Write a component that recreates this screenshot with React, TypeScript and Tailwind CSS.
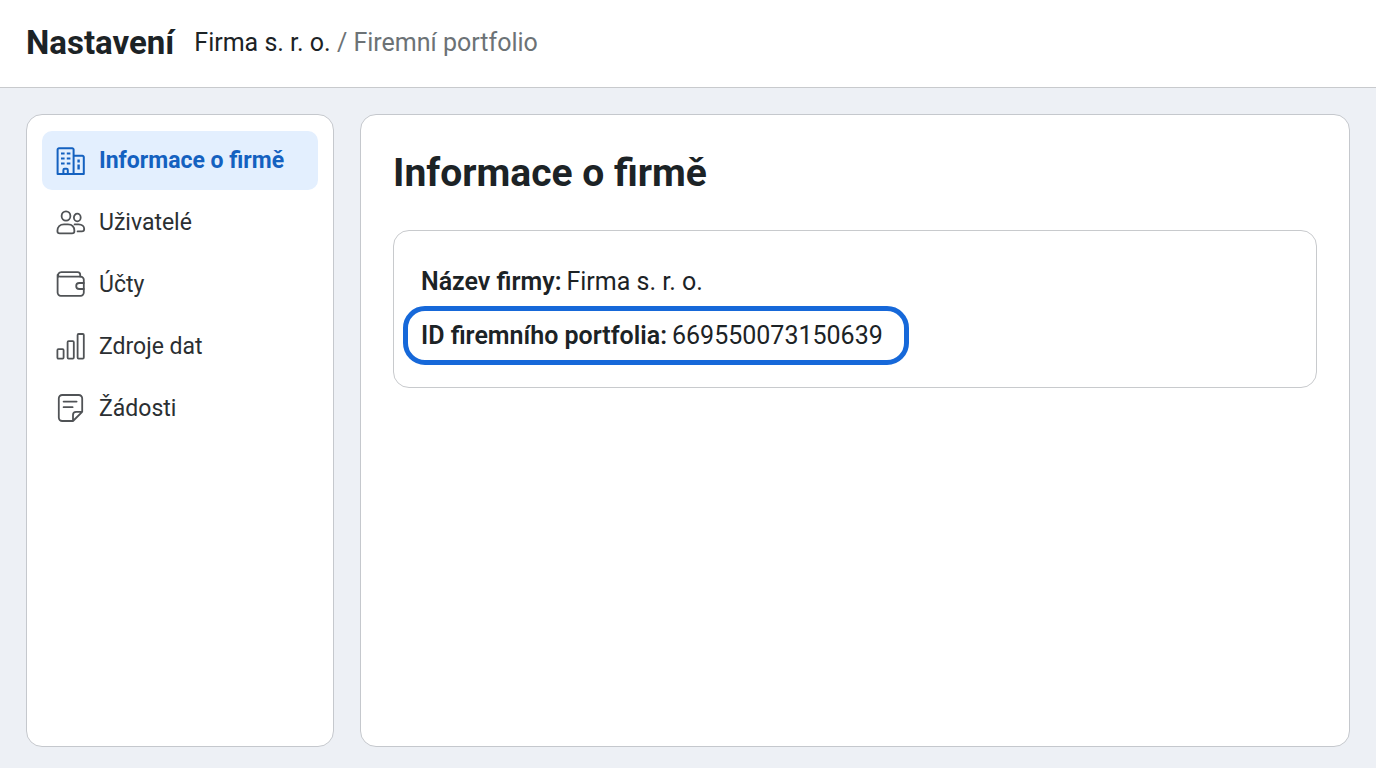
import React, { useState } from 'react';
import clsx from 'clsx';

type IconProps = { children: React.ReactNode };

function Icon({ children }: IconProps) {
    return (
        <svg
            viewBox="0 0 30 30"
            className="h-[30px] w-[30px] shrink-0"
            fill="none"
            stroke="currentColor"
            strokeWidth="1.8"
            strokeLinecap="round"
            strokeLinejoin="round"
            aria-hidden="true"
        >
            {children}
        </svg>
    );
}

const BuildingIcon = () => (
    <Icon>
        <path strokeWidth="2" d="M18 28H1.6V3.6A1.4 1.4 0 0 1 3 2.2H16.2A1.4 1.4 0 0 1 17.6 3.6V28M17.6 9.8H26.4A1.4 1.4 0 0 1 27.8 11.2V28H17.6" />
        <path strokeWidth="2" d="M7.4 28V24A1.2 1.2 0 0 1 8.6 22.8H10.6A1.2 1.2 0 0 1 11.8 24V28" />
        {/* windows */}
        <path strokeWidth="2" strokeLinecap="butt" d="M5 7.4H8.6M10.8 7.4H14.4M5 12.4H8.6M10.8 12.4H14.4M5 17.6H8.6M10.8 17.6H14.4" />
        <path strokeWidth="2.4" strokeLinecap="butt" d="M22.6 13.4V16.6M22.6 18.6V23.6" />
    </Icon>
);

const UsersIcon = () => (
    <Icon>
        <ellipse cx="10" cy="8" rx="4.4" ry="4.7" />
        <ellipse cx="21.3" cy="9.5" rx="3.4" ry="3.8" />
        <path d="M1.4 23C1.4 19 4 16.4 8 16.4H12C16 16.4 18.4 19 18.4 23A2.4 2.4 0 0 1 16 25.4H3.8A2.4 2.4 0 0 1 1.4 23Z" />
        <path d="M18.6 16.4H22.6C26 16.4 28.2 18.4 28.2 21C28.2 22.6 27.2 23.4 25.8 23.4H21.6" />
    </Icon>
);

const WalletIcon = () => (
    <Icon>
        <path d="M2 6.8C1.6 4 2.8 2.2 5.4 2.2H21.6A2.6 2.6 0 0 1 24.2 4.8V6.6" />
        <path d="M1.6 5V22.6A3.2 3.2 0 0 0 4.8 25.8H24.6A3.2 3.2 0 0 0 27.8 22.6V9.8A3.2 3.2 0 0 0 24.6 6.6H4.2C2.6 6.6 1.6 6 1.6 5" />
        <path d="M27.8 13H23.2A3 3 0 0 0 23.2 19H27.8" />
    </Icon>
);

const ChartIcon = () => (
    <Icon>
        <rect x="1.4" y="17.2" width="6.2" height="9.4" rx="1" />
        <rect x="11.6" y="9.2" width="6.2" height="17.4" rx="1" />
        <rect x="21.6" y="2" width="6.2" height="24.6" rx="1" />
    </Icon>
);

const NoteIcon = () => (
    <Icon>
        <path d="M17 27H6.2A3.4 3.4 0 0 1 2.8 23.6V4.4A3.4 3.4 0 0 1 6.2 1H22.8A3.4 3.4 0 0 1 26.2 4.4V17.8L17 27V21A3.2 3.2 0 0 1 20.2 17.8H26.2" />
        <path d="M7.6 7.6H20.6M7.6 13.2H16.6" />
    </Icon>
);

const navItems = [
    { id: 'info', label: 'Informace o firmě', icon: BuildingIcon },
    { id: 'users', label: 'Uživatelé', icon: UsersIcon },
    { id: 'accounts', label: 'Účty', icon: WalletIcon },
    { id: 'sources', label: 'Zdroje dat', icon: ChartIcon },
    { id: 'requests', label: 'Žádosti', icon: NoteIcon }
];

export default function App() {
    const [active, setActive] = useState('info');

    return (
        <div className="flex min-h-screen flex-col bg-[#edf0f5] font-[Roboto,sans-serif] text-[#1c2326]">
            <header className="flex items-center gap-5 border-b border-[#c8cacd] bg-white px-[26px] pt-[21px] pb-[23px]">
                <h1 className="text-[33px] leading-[43px] font-bold">Nastavení</h1>
                <nav aria-label="Drobečková navigace" className="text-[25px] leading-[33px]">
                    <a href="#firma">Firma s. r. o.</a>
                    <span className="text-[#6c7276]"> / Firemní portfolio</span>
                </nav>
            </header>

            <div className="flex grow gap-[26px] px-[26px] pt-[26px] pb-[21px]">
                <aside className="w-[308px] shrink-0 rounded-2xl border border-[#c5c8cd] bg-white px-[15px] py-4">
                    <nav className="flex flex-col gap-[3px]">
                        {navItems.map(({ id, label, icon: ItemIcon }) => (
                            <a
                                key={id}
                                href={`#${id}`}
                                onClick={() => setActive(id)}
                                aria-current={active === id ? 'page' : undefined}
                                className={clsx(
                                    'flex items-center gap-[13px] rounded-[10px] px-[14px] py-[13px] text-[23px] leading-[33px]',
                                    active === id
                                        ? 'bg-[#e3effe] font-bold text-[#1461c0]'
                                        : 'text-[#2b2f32] hover:bg-gray-50'
                                )}
                            >
                                <span className={active === id ? 'text-[#1461c0]' : 'text-[#505356]'}>
                                    <ItemIcon />
                                </span>
                                {label}
                            </a>
                        ))}
                    </nav>
                </aside>

                <main className="grow rounded-2xl border border-[#c5c8cd] bg-white px-8 py-[34px]">
                    <h2 className="text-[39px] leading-[48px] font-bold">Informace o firmě</h2>
                    <dl className="mt-[33px] rounded-2xl border border-[#c8cacd] px-[9px] pt-[26px] pb-[22px] text-[25px] leading-[33px]">
                        <div className="flex gap-[5px] px-[18px] py-2">
                            <dt className="font-semibold">Název firmy:</dt>
                            <dd>Firma s. r. o.</dd>
                        </div>
                        {/* highlighted portfolio ID */}
                        <div className="flex w-fit gap-[5px] rounded-[22px] border-[5px] border-[#1668d9] py-2 pr-[21px] pl-[13px]">
                            <dt className="font-semibold">ID firemního portfolia:</dt>
                            <dd>669550073150639</dd>
                        </div>
                    </dl>
                </main>
            </div>
        </div>
    );
}
